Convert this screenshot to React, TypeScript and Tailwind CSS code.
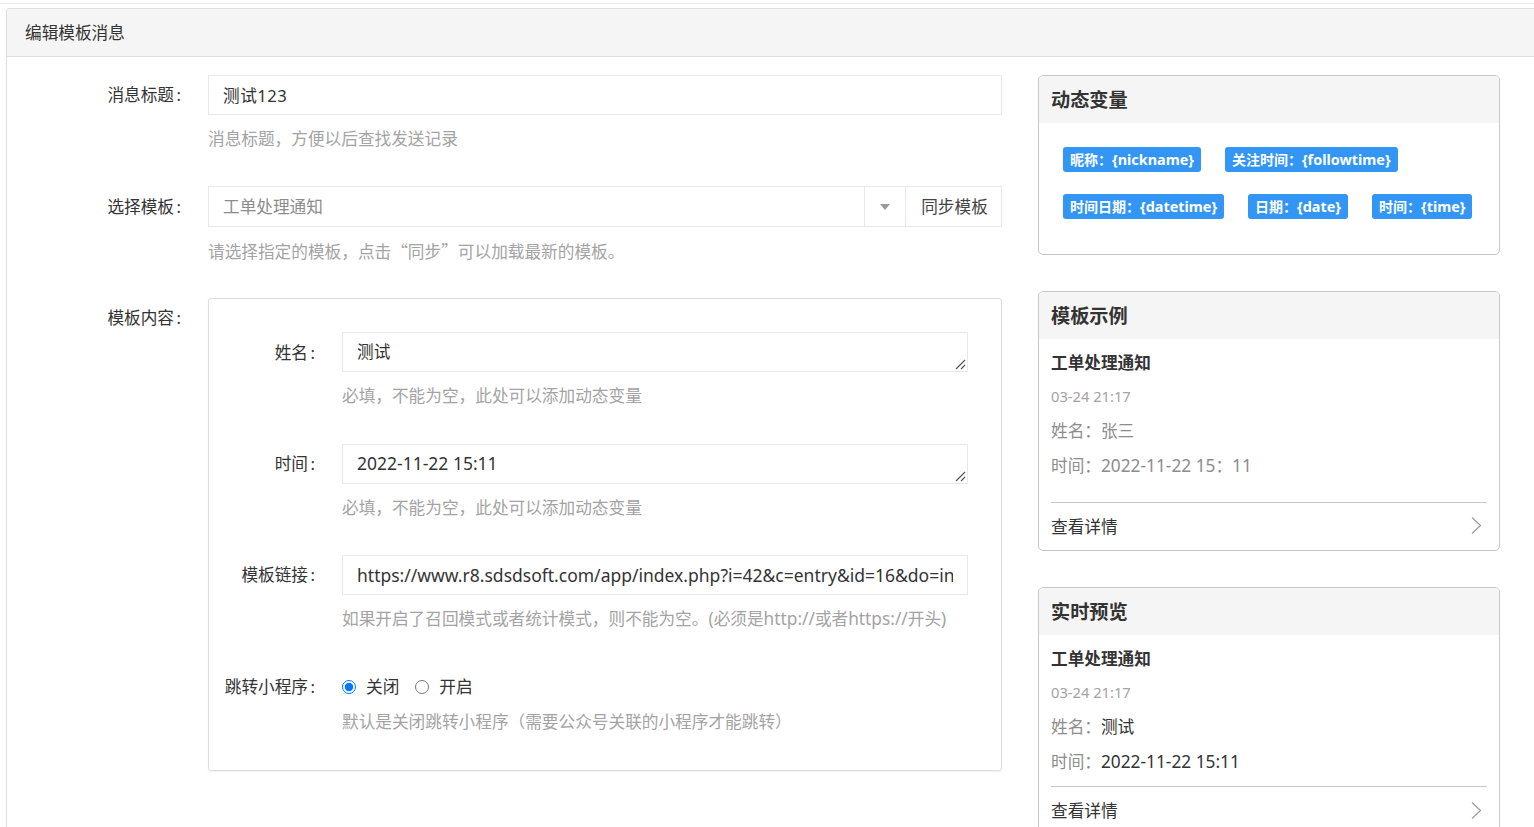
const font = "font-['Noto_Sans','Noto_Sans_CJK_SC',sans-serif]"

// latin runs are a bit larger than the cjk text around them
function L({ children }: { children: React.ReactNode }) {
  return <span className="text-[17.3px] leading-none">{children}</span>
}

function Help({ children }: { children: React.ReactNode }) {
  return <p className="mt-3 h-6 text-[16.67px] leading-6 whitespace-nowrap text-[#a3a3a3]">{children}</p>
}

function Label({ text, width, shift = "pb-[2px]" }: { text: string; width: string; shift?: string }) {
  return (
    <label className={`flex h-10 shrink-0 items-center justify-end text-[16.67px] text-[#333] ${width} ${shift}`}>
      {text}
      <span className="ml-[2.5px]">:</span>
    </label>
  )
}

function Card({ title, children }: { title: string; children: React.ReactNode }) {
  return (
    <div className="overflow-hidden rounded-[5px] border border-[#c8c8c8] bg-white">
      <div className="flex h-[47px] items-center bg-[#f5f5f5] px-3 pt-[2px] text-[19.2px] font-bold text-[#333]">{title}</div>
      {children}
    </div>
  )
}

function Tag({ name, code }: { name: string; code: string }) {
  return (
    <span className="flex h-[25px] items-center rounded-[3px] bg-[#3396f4] px-[7px] text-[14px] font-bold text-white">
      {name}：<span className="text-[14.4px]">{code}</span>
    </span>
  )
}

function Chevron({ mb }: { mb: string }) {
  return (
    <svg className={mb} width="12" height="19" viewBox="0 0 12 19" fill="none" stroke="#9a9a9a" strokeWidth="1.2">
      <path d="M2 1.5 L10.5 9.5 L2 17.5" />
    </svg>
  )
}

function Preview({ name, time, dark, last }: { name: string; time: React.ReactNode; dark?: boolean; last?: boolean }) {
  return (
    <div className="px-3">
      <p className="mt-3 h-6 text-[16.67px] leading-6 font-bold text-[#333]">工单处理通知</p>
      <p className="mt-[11px] h-5 text-[14.7px] leading-5 text-[#a3a3a3]">03-24 21:17</p>
      <p className="mt-[13px] h-6 text-[16.67px] leading-6 text-[#8c8c8c]">
        姓名：<span className={dark ? "text-[#333]" : ""}>{name}</span>
      </p>
      <p className="mt-[11px] h-6 text-[16.67px] leading-6 text-[#8c8c8c]">
        时间：<span className={dark ? "text-[#333]" : ""}>{time}</span>
      </p>
      <div className={last ? "mt-3 border-t border-[#c8c8c8]" : "mt-6 border-t border-[#c8c8c8]"}>
        <div className="mt-3 mb-[11px] flex h-6 items-center justify-between pr-[5px] text-[16.67px] leading-6 text-[#333]">
          <span>查看详情</span>
          <Chevron mb={last ? "mb-[1px]" : "mb-[3px]"} />
        </div>
      </div>
    </div>
  )
}

const fieldClass = "h-10 w-[626px] border border-[#e8e8e8] bg-white px-[14px] leading-[22px] text-[#333] outline-none"

function InnerRow({ label, help, children, mb, shift }: { label: string; help: React.ReactNode; children: React.ReactNode; mb: string; shift?: string }) {
  return (
    <div className={`flex ${mb}`}>
      <Label text={label} width="w-[106px]" shift={shift} />
      <div className="ml-[27px]">
        {children}
        <Help>{help}</Help>
      </div>
    </div>
  )
}

function AreaField({ value, size }: { value: string; size: string }) {
  return (
    <div className="relative w-[626px]">
      <textarea readOnly value={value} className={`block resize-none ${size} ${fieldClass}`} />
      <svg className="absolute right-[2px] bottom-[2px]" width="11" height="11" viewBox="0 0 11 11" stroke="#555" strokeWidth="1.2">
        <path d="M1 10 L10 1 M6 10 L10 6" />
      </svg>
    </div>
  )
}

export default function App() {
  return (
    <div className={`h-[827px] overflow-hidden bg-white ${font}`}>
      <div className="mt-[3px] h-px bg-[#e8e8e8]" />
      <div className="mt-1 ml-[6px] -mr-4 rounded-t-[3px] border border-[#dedede]">
        <div className="flex h-[48px] items-center border-b border-[#dedede] bg-[#f5f5f5] px-[18px] pb-[1px] text-[16.67px] text-[#333]">
          编辑模板消息
        </div>
        <div className="flex pt-[18px]">
          <div className="w-[995px] shrink-0">
            <div className="mb-[35px] flex">
              <Label text="消息标题" width="w-[174px]" />
              <div className="ml-[27px] w-[794px]">
                <input
                  readOnly
                  value="测试123"
                  className="block h-10 w-full border border-[#e8e8e8] px-[14px] text-[16.67px] tracking-[0.5px] text-[#333] outline-none"
                />
                <Help>消息标题，方便以后查找发送记录</Help>
              </div>
            </div>

            <div className="mb-[35px] flex">
              <Label text="选择模板" width="w-[174px]" shift="pt-[1px]" />
              <div className="ml-[27px] w-[794px]">
                <div className="flex h-[41px] border border-[#e8e8e8] text-[16.67px]">
                  <div className="flex flex-1 items-center px-[14px] text-[#8c8c8c]">工单处理通知</div>
                  <div className="flex w-[42px] items-center justify-center border-x border-[#e8e8e8]">
                    <div className="h-0 w-0 border-x-[5.5px] border-t-[6px] border-x-transparent border-t-[#999]" />
                  </div>
                  <div className="flex w-[95px] items-center justify-center pl-[2px] text-[#444]">同步模板</div>
                </div>
                <Help>
                  请选择指定的模板，点击<span className="font-['Noto_Sans_CJK_SC']">“同步”</span>可以加载最新的模板。
                </Help>
              </div>
            </div>

            <div className="flex">
              <Label text="模板内容" width="w-[174px]" />
              <div className="ml-[27px] h-[473px] w-[794px] rounded-[3px] border border-[#dcdcdc] pt-[33px] shadow-[0_1px_2px_rgba(0,0,0,0.06)]">
                <InnerRow label="姓名" help="必填，不能为空，此处可以添加动态变量" mb="mb-9" shift="pb-0">
                  <AreaField value="测试" size="py-2 text-[16.67px]" />
                </InnerRow>
                <InnerRow label="时间" help="必填，不能为空，此处可以添加动态变量" mb="mb-[35px]">
                  <AreaField value="2022-11-22 15:11" size="py-[7px] text-[17.5px]" />
                </InnerRow>
                <InnerRow
                  label="模板链接"
                  help={
                    <>
                      如果开启了召回模式或者统计模式，则不能为空。<L>(</L>必须是<L>http://</L>或者<L>https://</L>开头<L>)</L>
                    </>
                  }
                  mb="mb-9"
                >
                  <input
                    readOnly
                    value="https://www.r8.sdsdsoft.com/app/index.php?i=42&c=entry&id=16&do=index&m=sdsd_message"
                    className={`block text-[17.5px] ${fieldClass}`}
                  />
                </InnerRow>
                <div className="flex">
                  <Label text="跳转小程序" width="w-[106px]" />
                  <div className="ml-[27px]">
                    <div className="flex h-10 items-center pb-[1px] text-[16.67px] text-[#333]">
                      <input type="radio" name="mini" defaultChecked className="m-0 h-[14px] w-[14px] accent-[#0075ff]" />
                      <span className="ml-[10px]">关闭</span>
                      <input type="radio" name="mini" className="m-0 ml-4 h-[14px] w-[14px]" />
                      <span className="ml-[10px]">开启</span>
                    </div>
                    <p className="mt-[3px] h-6 text-[16.67px] leading-6 whitespace-nowrap text-[#a3a3a3]">默认是关闭跳转小程序（需要公众号关联的小程序才能跳转）</p>
                  </div>
                </div>
              </div>
            </div>
          </div>

          <div className="ml-9 flex w-[462px] shrink-0 flex-col gap-9">
            <Card title="动态变量">
              <div className="flex h-[131px] flex-wrap content-start gap-x-6 gap-y-[22px] pt-6 pl-6">
                <Tag name="昵称" code="{nickname}" />
                <Tag name="关注时间" code="{followtime}" />
                <Tag name="时间日期" code="{datetime}" />
                <Tag name="日期" code="{date}" />
                <Tag name="时间" code="{time}" />
              </div>
            </Card>
            <Card title="模板示例">
              <Preview name="张三" time={<><L>2022-11-22 15</L>：<L>11</L></>} />
            </Card>
            <Card title="实时预览">
              <Preview name="测试" time={<L>2022-11-22 15:11</L>} dark last />
            </Card>
          </div>
        </div>
      </div>
    </div>
  )
}
